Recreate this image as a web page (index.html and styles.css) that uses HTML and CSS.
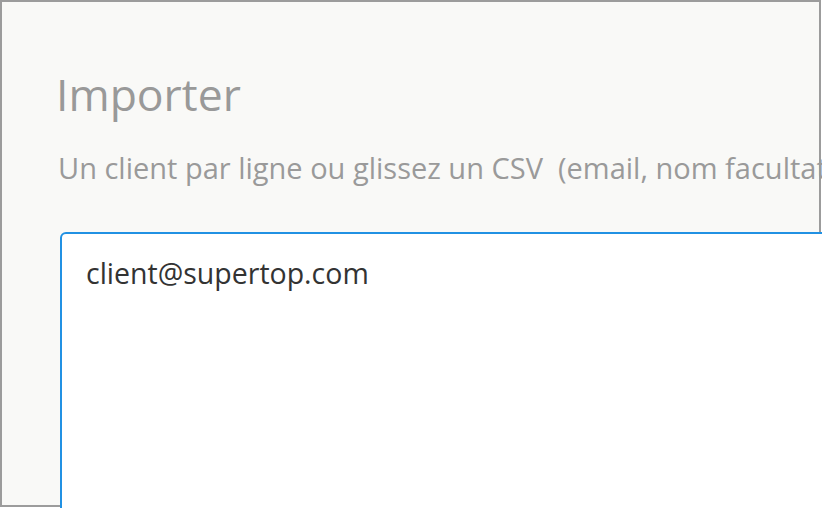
FILE: index.html
```html
<!DOCTYPE html>
<html lang="fr">
<head>
<meta charset="utf-8">
<title>Importer</title>
<link rel="stylesheet" href="styles.css">
</head>
<body>
<div class="frame">
  <h1 class="title">Importer</h1>
  <p class="hint">Un client par ligne ou glissez un CSV&nbsp; (email, nom facultatif)</p>
  <textarea class="input" spellcheck="false">client@supertop.com</textarea>
</div>
</body>
</html>
```

FILE: styles.css
```css
html, body {
  margin: 0;
  padding: 0;
  overflow: hidden;
  width: 822px;
  height: 508px;
  background: #ffffff;
}
.frame {
  box-sizing: border-box;
  width: 821px;
  height: 507px;
  border: 2px solid #9c9c9c;
  background: #f9f9f7;
  padding: 0 0 0 56px;
  font-family: "Open Sans", "Liberation Sans", sans-serif;
}
.title {
  margin: 0 0 0 -2px;
  padding-top: 62px;
  font-size: 44.5px;
  font-weight: 400;
  line-height: 60px;
  color: #999999;
}
.hint {
  margin: 26px 0 0 0;
  font-size: 29px;
  line-height: 36px;
  color: #9a9a9a;
  white-space: nowrap;
}
.input {
  display: block;
  box-sizing: border-box;
  margin: 46px 0 0 2px;
  width: 820px;
  height: 320px;
  border: 2px solid #2191e3;
  border-radius: 6px;
  background: #ffffff;
  padding: 21px 24px;
  font-family: "Open Sans", "Liberation Sans", sans-serif;
  font-size: 28.5px;
  line-height: 36px;
  color: #333333;
  resize: none;
  overflow: hidden;
  outline: none;
}
```
